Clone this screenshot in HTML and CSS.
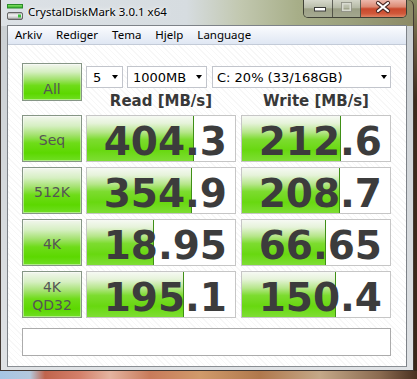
FILE: index.html
```html
<!DOCTYPE html>
<html>
<head>
<meta charset="utf-8">
<title>CrystalDiskMark</title>
<link rel="stylesheet" href="styles.css">
</head>
<body>
<div class="desktop">
  <div class="window">
    <div class="titlebar">
      <svg class="app-icon" width="16" height="16" viewBox="0 0 16 16">
        <defs>
          <linearGradient id="gbar" x1="0" y1="0" x2="0" y2="1">
            <stop offset="0" stop-color="#8ee86a"/>
            <stop offset="1" stop-color="#2fae2a"/>
          </linearGradient>
          <linearGradient id="gdrv" x1="0" y1="0" x2="0" y2="1">
            <stop offset="0" stop-color="#9a9a9a"/>
            <stop offset="0.35" stop-color="#f4f4f4"/>
            <stop offset="0.7" stop-color="#d0d0d0"/>
            <stop offset="1" stop-color="#7a7a7a"/>
          </linearGradient>
        </defs>
        <rect x="0.5" y="0.5" width="15" height="3.5" fill="url(#gbar)" stroke="#2a8a2a" stroke-width="1"/>
        <rect x="0.5" y="8.5" width="15" height="7" rx="1.5" fill="url(#gdrv)" stroke="#666" stroke-width="1"/>
        <rect x="11" y="10.5" width="3" height="3" fill="#3cc43c"/>
      </svg>
      <span class="title">CrystalDiskMark 3.0.1 x64</span>
      <div class="caption-buttons">
        <div class="cb cb-min">
          <svg width="29" height="17" viewBox="0 0 29 17"><rect x="10.5" y="7.5" width="11" height="3.5" fill="#fff" stroke="#3a3a3a" stroke-width="1"/></svg>
        </div>
        <div class="cb cb-max">
          <svg width="27" height="17" viewBox="0 0 27 17"><rect x="9.5" y="3.5" width="8" height="7" fill="none" stroke="#d8dad0" stroke-width="2"/><rect x="8.5" y="2.5" width="10" height="9" fill="none" stroke="#8a8c80" stroke-width="0.8"/></svg>
        </div>
        <div class="cb cb-close">
          <svg width="45" height="17" viewBox="0 0 45 17"><path d="M17 3 L27 11 M27 3 L17 11" stroke="#4a2a26" stroke-width="4.2" stroke-linecap="round"/><path d="M17 3 L27 11 M27 3 L17 11" stroke="#ffffff" stroke-width="2.2" stroke-linecap="round"/></svg>
        </div>
      </div>
    </div>
    <div class="client">
      <div class="menubar">
        <span class="menu-item">Arkiv</span>
        <span class="menu-item">Rediger</span>
        <span class="menu-item">Tema</span>
        <span class="menu-item">Hjelp</span>
        <span class="menu-item">Language</span>
      </div>
      <div class="content">
        <div class="top">
          <div class="btn btn-all">All</div>
          <div class="controls">
            <div class="combos">
              <div class="combo combo-count"><span>5</span><i class="arrow"></i></div>
              <div class="combo combo-size"><span>1000MB</span><i class="arrow"></i></div>
              <div class="combo combo-drive"><span>C: 20% (33/168GB)</span><i class="arrow"></i></div>
            </div>
            <div class="headers">
              <div class="header">Read [MB/s]</div>
              <div class="header">Write [MB/s]</div>
            </div>
          </div>
        </div>
        <div class="rows">
          <div class="row">
            <div class="btn">Seq</div>
            <div class="val"><div class="bar" style="width:72.1%"></div><span class="num">404.3</span></div>
            <div class="val val-w"><div class="bar" style="width:66.6%"></div><span class="num">212.6</span></div>
          </div>
          <div class="row">
            <div class="btn">512K</div>
            <div class="val"><div class="bar" style="width:71.0%"></div><span class="num">354.9</span></div>
            <div class="val val-w"><div class="bar" style="width:66.4%"></div><span class="num">208.7</span></div>
          </div>
          <div class="row">
            <div class="btn">4K</div>
            <div class="val"><div class="bar" style="width:45.6%"></div><span class="num">18.95</span></div>
            <div class="val val-w"><div class="bar" style="width:56.5%"></div><span class="num">66.65</span></div>
          </div>
          <div class="row">
            <div class="btn btn-two">4K<br>QD32</div>
            <div class="val"><div class="bar" style="width:65.8%"></div><span class="num">195.1</span></div>
            <div class="val val-w"><div class="bar" style="width:63.5%"></div><span class="num">150.4</span></div>
          </div>
        </div>
        <div class="comment"></div>
      </div>
    </div>
  </div>
</div>
</body>
</html>
```

FILE: styles.css
```css
* { box-sizing: border-box; }
html, body { margin: 0; padding: 0; }
body {
  width: 417px;
  height: 379px;
  overflow: hidden;
  font-family: "DejaVu Sans", sans-serif;
}

.desktop {
  width: 417px;
  height: 379px;
  overflow: hidden;
  background:
    linear-gradient(90deg, #a6c6e4 0, #b4c8dc 30px, #c0644c 45px, #d4806a 80px, #e4b4a0 110px, #c87a5a 150px, #d09a6a 200px, #b0784c 260px, #c4a888 320px, #8a6a50 380px, #4a3020 417px) left bottom / 100% 8px no-repeat,
    linear-gradient(#868a62 0, #6a5c40 40px, #3e2a1c 100px, #3a2618 100%);
}

.window {
  width: 414px;
  height: 371px;
  border: 1px solid rgba(40, 28, 20, 0.85);
  border-top: none;
  border-radius: 0 6px 0 0;
  padding: 0 6px 3px 6px;
  display: flex;
  flex-direction: column;
  background:
    linear-gradient(90deg, #dce1e6 0%, #d6dce0 45%, #c2c8b0 58%, #a7ae88 72%, #9ba07c 85%, #8c8a66 100%) left top / 100% 26px no-repeat,
    linear-gradient(#c9ced2, #dfe2e5);
}

/* title bar */
.titlebar {
  height: 25px;
  display: flex;
  align-items: flex-start;
  flex: none;
}
.app-icon { margin-top: 4px; flex: none; }
.title {
  margin: 4px 0 0 5px;
  font-family: "Noto Sans", sans-serif;
  font-size: 11.5px;
  line-height: 16px;
  color: #000;
  text-shadow: 0 0 6px rgba(255, 255, 255, 0.95), 0 0 3px rgba(255, 255, 255, 0.9);
}
.caption-buttons {
  margin-left: auto;
  display: flex;
  height: 18px;
  border: 1px solid rgba(40, 40, 36, 0.8);
  border-top: none;
  border-radius: 0 0 5px 5px;
  overflow: hidden;
}
.cb { height: 17px; }
.cb svg { display: block; }
.cb-min {
  width: 29px;
  border-right: 1px solid rgba(50, 50, 44, 0.7);
  background: linear-gradient(#d6d8cc 0%, #b9bdaa 45%, #9da186 52%, #a6aa92 100%);
}
.cb-max {
  width: 28px;
  border-right: 1px solid rgba(50, 50, 44, 0.7);
  background: linear-gradient(#d3d5c8 0%, #b6baa6 45%, #9a9e84 52%, #a3a78f 100%);
}
.cb-close {
  width: 45px;
  background: linear-gradient(#ecb8ac 0%, #dc8a74 40%, #c9482c 52%, #d0583a 80%, #e08464 100%);
}

/* client area */
.client {
  height: 342px;
  flex: none;
  border: 1px solid #7d8288;
  border-bottom-color: #8a8f94;
  background: #fff;
  display: flex;
  flex-direction: column;
}
.menubar {
  height: 19px;
  flex: none;
  display: flex;
  padding-left: 0;
  background: linear-gradient(#fbfcfe 0%, #eef2f9 45%, #dfe7f3 100%);
  border-bottom: 1px solid #c3cbd8;
  font-family: "Noto Sans", sans-serif;
  font-size: 11.5px;
  line-height: 18px;
  color: #000;
}
.menu-item { padding: 0 7px; }

.content {
  flex: 1;
  padding: 18px 0 0 14px;
  background: repeating-linear-gradient(45deg, #ffffff 0 3px, #f7f7f7 3px 4px);
}

.top {
  display: flex;
  gap: 4px;
  align-items: flex-start;
  height: 47px;
}
.controls { width: 305px; }
.combos {
  display: flex;
  margin-top: 3px;
  height: 22px;
}
.combo {
  height: 22px;
  display: flex;
  align-items: center;
  justify-content: space-between;
  background: #fff;
  border: 1px solid #c2c5cc;
  font-family: "DejaVu Sans", sans-serif;
  font-size: 13px;
  color: #000;
}
.combo-count { width: 37px; padding: 0 4px 0 6px; }
.combo-size { width: 80px; margin-left: 4px; padding: 0 4px 0 5px; }
.combo-drive { width: 179px; margin-left: 5px; padding: 0 3px 0 4px; }
.arrow {
  width: 0;
  height: 0;
  border-left: 3.5px solid transparent;
  border-right: 3.5px solid transparent;
  border-top: 4px solid #000;
}

.headers {
  display: flex;
  gap: 5px;
  padding-top: 5px;
}
.header {
  width: 150px;
  text-align: center;
  font-weight: bold;
  font-size: 15px;
  line-height: 17px;
  color: #383838;
}

.btn {
  width: 60px;
  height: 47px;
  flex: none;
  display: flex;
  align-items: center;
  justify-content: center;
  text-align: center;
  padding-top: 3px;
  border: 1px solid #869686;
  box-shadow: inset 0 0 0 1px rgba(255, 255, 255, 0.45);
  background: linear-gradient(#f2f6ee 0%, #d6efc2 22%, #a4e270 42%, #6edc18 60%, #5cd800 82%, #70de24 100%);
  font-size: 14px;
  line-height: 18px;
  color: #555;
}
.btn-all {
  height: 38px;
  padding-top: 13px;
}

.rows {
  margin-top: 5px;
  display: flex;
  flex-direction: column;
  gap: 5px;
}
.row {
  display: flex;
  gap: 4px;
}
.val {
  width: 150px;
  height: 47px;
  border: 1px solid #c6c6c6;
  background: #fff;
  display: grid;
}
.val-w { margin-left: 1px; }
.val > * { grid-area: 1 / 1; }
.bar {
  height: 100%;
  justify-self: start;
  border-right: 1px solid #3f8f16;
  background: linear-gradient(#f6f9f3 0%, #e6f3da 16%, #b6e68a 36%, #7ddc30 52%, #68d810 76%, #7ede34 100%);
}
.num {
  justify-self: end;
  padding: 6px 8px 0 0;
  font-weight: bold;
  font-size: 39px;
  line-height: 39px;
  color: #3c3c3c;
}

.comment {
  margin-top: 10px;
  width: 369px;
  height: 28px;
  border: 1px solid #ababab;
  background: #fff;
}
```
